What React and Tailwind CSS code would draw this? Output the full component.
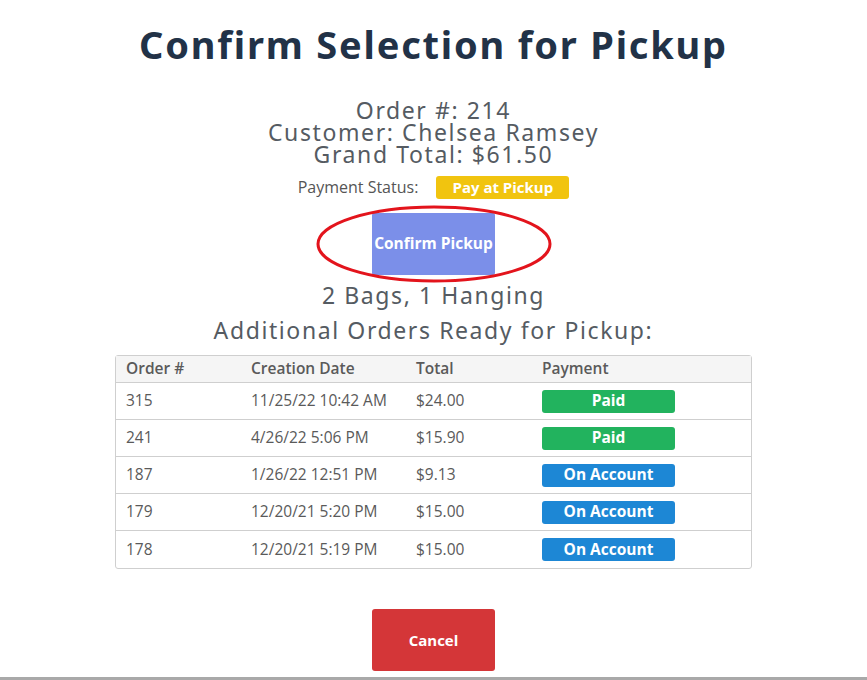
import React from 'react';

const orders = [
    { id: '315', date: '11/25/22 10:42 AM', total: '$24.00', payment: 'Paid' },
    { id: '241', date: '4/26/22 5:06 PM', total: '$15.90', payment: 'Paid' },
    { id: '187', date: '1/26/22 12:51 PM', total: '$9.13', payment: 'On Account' },
    { id: '179', date: '12/20/21 5:20 PM', total: '$15.00', payment: 'On Account' },
    { id: '178', date: '12/20/21 5:19 PM', total: '$15.00', payment: 'On Account' },
];

const PaymentBadge = ({ type }) => (
    <div
        className={`w-[133px] h-[23px] rounded-[3px] flex items-center justify-center text-white font-bold text-[15.5px] ${
            type === 'Paid' ? 'bg-[#22b35e]' : 'bg-[#1d87d5]'
        }`}
    >
        {type}
    </div>
);

export default function App() {
    return (
        <div className="w-[867px] h-[680px] bg-white relative flex flex-col items-center overflow-hidden" style={{ fontFamily: '"Open Sans", sans-serif' }}>
            <h1 className="mt-[22px] text-[38px] leading-[44px] font-bold text-[#223247] tracking-[1.8px]" style={{ fontFamily: '"Noto Sans", sans-serif' }}>
                Confirm Selection for Pickup
            </h1>

            <div className="mt-[33px] flex flex-col items-center text-[#555b62] text-[23px] leading-[22px] tracking-[1.6px]" style={{ fontFamily: '"Noto Sans", sans-serif' }}>
                <p>Order #: 214</p>
                <p>Customer: Chelsea Ramsey</p>
                <p>Grand Total: $61.50</p>
            </div>

            <div className="mt-[10px] flex items-center gap-[18px]">
                <span className="text-[16px] text-[#555]">Payment Status:</span>
                <span className="w-[133px] h-[23px] rounded-[3px] bg-[#f1c40f] text-white font-bold text-[15px] flex items-center justify-center">
                    Pay at Pickup
                </span>
            </div>

            <div className="relative mt-[14px]">
                <button className="w-[123px] h-[62px] bg-[#7b8fe9] text-white font-bold text-[15.5px] rounded-[2px]">
                    Confirm Pickup
                </button>
                <svg className="absolute left-[-57px] top-[-9px] pointer-events-none" width="238" height="80" viewBox="0 0 238 80">
                    <ellipse cx="119" cy="40" rx="116" ry="37" fill="none" stroke="#e3141c" strokeWidth="3" />
                </svg>
            </div>

            <p className="mt-[8px] text-[23px] leading-[24px] text-[#555b62] tracking-[1.6px]" style={{ fontFamily: '"Noto Sans", sans-serif' }}>
                2 Bags, 1 Hanging
            </p>
            <p className="mt-[11px] text-[23px] leading-[24px] text-[#555b62] tracking-[1.6px]" style={{ fontFamily: '"Noto Sans", sans-serif' }}>
                Additional Orders Ready for Pickup:
            </p>

            <div className="mt-[13px] w-[637px] border border-[#cfcfcf] rounded-[3px] text-[15.5px] text-[#5a5a5a]">
                <div className="flex items-center h-[27px] bg-[#f5f5f5] border-b border-[#cfcfcf] font-semibold">
                    <div className="w-[135px] pl-[10px]">Order #</div>
                    <div className="w-[165px]">Creation Date</div>
                    <div className="w-[126px]">Total</div>
                    <div>Payment</div>
                </div>
                {orders.map((o, i) => (
                    <div key={o.id} className={`flex items-center h-[37px] ${i < orders.length - 1 ? 'border-b border-[#cfcfcf]' : ''}`}>
                        <div className="w-[135px] pl-[10px]">{o.id}</div>
                        <div className="w-[165px]">{o.date}</div>
                        <div className="w-[126px]">{o.total}</div>
                        <PaymentBadge type={o.payment} />
                    </div>
                ))}
            </div>

            <button className="mt-[40px] w-[123px] h-[62px] bg-[#d43638] text-white font-bold text-[15px] rounded-[3px]">
                Cancel
            </button>

            <div className="absolute left-0 right-0 bottom-0 h-[3px] bg-[#a9a9a9]" />
        </div>
    );
}
